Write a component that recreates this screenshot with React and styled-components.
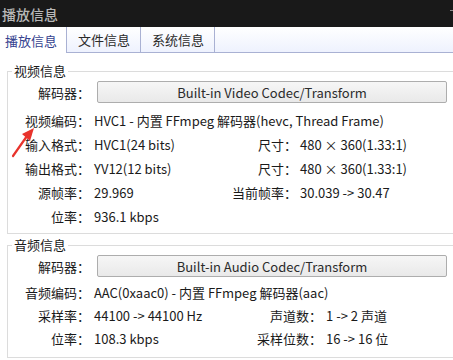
import React from 'react';
import styled, { createGlobalStyle } from 'styled-components';

const GlobalStyle = createGlobalStyle`
    html, body {
        margin: 0;
        padding: 0;
        background: #ffffff;
    }
    body {
        font-family: "Noto Sans CJK SC", "Noto Sans", sans-serif;
        font-size: 13px;
        color: #1a1a1a;
    }
`;

const Window = styled.div`
    position: relative;
    width: 453px;
    height: 360px;
    overflow: hidden;
    background: #ffffff;
`;

const TitleBar = styled.div`
    height: 27px;
    background: #191919;
    display: flex;
    align-items: center;
    justify-content: space-between;
    padding-left: 2px;
    color: #b8b8b8;
    font-size: 14px;
    font-weight: 500;
`;

const TitleDash = styled.span`
    width: 3px;
    height: 1px;
    background: #8a8a8a;
    margin-bottom: 6px;
`;

const TabBar = styled.div`
    height: 25px;
    display: flex;
    background: linear-gradient(#ffffff, #eef2fe);
    border-bottom: 1px solid #a9b1d3;
`;

const Tab = styled.div`
    display: flex;
    align-items: center;
    padding: ${p => (p.$active ? '0 9px 0 5px' : '0 10px 0 11px')};
    background: ${p => (p.$active ? '#ffffff' : 'transparent')};
    color: ${p => (p.$active ? '#35428f' : '#2a2a2a')};
    border-right: 1px solid #a9b1d3;
    margin-bottom: ${p => (p.$active ? '-1px' : '0')};
    line-height: 1;
`;

const Body = styled.div`
    padding-left: 7px;
`;

const Group = styled.fieldset`
    width: 460px;
    margin: ${p => p.$top}px 0 0 0;
    padding: 0 0 ${p => p.$bottom}px 0;
    border: 1px solid #dcdcdc;
    box-sizing: border-box;
`;

const Legend = styled.legend`
    margin-left: 4px;
    padding: 0 2px;
    line-height: 16px;
    color: #1a1a1a;
`;

const Row = styled.div`
    display: grid;
    grid-template-columns: 82px ${p => p.$valueW}px 65px 1fr;
    align-items: center;
    height: ${p => p.$h || 24}px;
    margin-top: ${p => p.$mt || 0}px;
    white-space: nowrap;
`;

const Label = styled.div`
    text-align: right;
`;

const Value = styled.div`
    padding-left: ${p => p.$pad}px;
    grid-column: ${p => (p.$wide ? '2 / -1' : 'auto')};
`;

const CodecButton = styled.button`
    grid-column: 2 / -1;
    margin-left: 7px;
    width: 350px;
    height: 22px;
    border: 1px solid #adadad;
    border-radius: 2px;
    background: linear-gradient(#f6f6f6, #e9e9e9);
    font-family: inherit;
    font-size: 13px;
    font-weight: 400;
    color: #2b2b2b;
    padding: 0;
`;

const Annotation = styled.svg`
    position: absolute;
    left: 8px;
    top: 124px;
`;

const videoRows = [
    ['输入格式：', 'HVC1(24 bits)', '尺寸：', '480 × 360(1.33:1)'],
    ['输出格式：', 'YV12(12 bits)', '尺寸：', '480 × 360(1.33:1)'],
    ['源帧率：', '29.969', '当前帧率：', '30.039 -> 30.47'],
    ['位率：', '936.1 kbps', '', ''],
];

const audioRows = [
    ['采样率：', '44100 -> 44100 Hz', '声道数：', '1 -> 2 声道'],
    ['位率：', '108.3 kbps', '采样位数：', '16 -> 16 位'],
];

const PairRow = ({ cells, valueW, pad, h }) => (
    <Row $valueW={valueW} $h={h}>
        <Label>{cells[0]}</Label>
        <Value $pad={4}>{cells[1]}</Value>
        <Label>{cells[2]}</Label>
        <Value $pad={pad}>{cells[3]}</Value>
    </Row>
);

const App = () => {
    return (
        <Window>
            <GlobalStyle />
            <TitleBar>
                播放信息
                <TitleDash />
            </TitleBar>
            <TabBar>
                <Tab $active>播放信息</Tab>
                <Tab>文件信息</Tab>
                <Tab>系统信息</Tab>
            </TabBar>
            <Body>
                <Group $top={10} $bottom={5}>
                    <Legend>视频信息</Legend>
                    <Row $valueW={142} $h={22} $mt={2}>
                        <Label>解码器：</Label>
                        <CodecButton>Built-in Video Codec/Transform</CodecButton>
                    </Row>
                    <Row $valueW={142} $mt={5}>
                        <Label>视频编码：</Label>
                        <Value $pad={4} $wide>HVC1 - 内置 FFmpeg 解码器(hevc, Thread Frame)</Value>
                    </Row>
                    {videoRows.map((r, i) => (
                        <PairRow key={i} cells={r} valueW={142} pad={3} />
                    ))}
                </Group>
                <Group $top={3} $bottom={7}>
                    <Legend>音频信息</Legend>
                    <Row $valueW={167} $h={22} $mt={2}>
                        <Label>解码器：</Label>
                        <CodecButton>Built-in Audio Codec/Transform</CodecButton>
                    </Row>
                    <Row $valueW={167} $mt={3}>
                        <Label>音频编码：</Label>
                        <Value $pad={4} $wide>AAC(0xaac0) - 内置 FFmpeg 解码器(aac)</Value>
                    </Row>
                    {audioRows.map((r, i) => (
                        <PairRow key={i} cells={r} valueW={167} pad={4} h={i === 0 ? 22 : 24} />
                    ))}
                </Group>
            </Body>
            <Annotation width="30" height="36" viewBox="0 0 30 36">
                <line x1="5" y1="32" x2="19" y2="12" stroke="#e8332c" strokeWidth="2.2" strokeLinecap="round" />
                <polygon points="26,4 14,10 22,17" fill="#e8332c" />
            </Annotation>
        </Window>
    );
};

export default App;
